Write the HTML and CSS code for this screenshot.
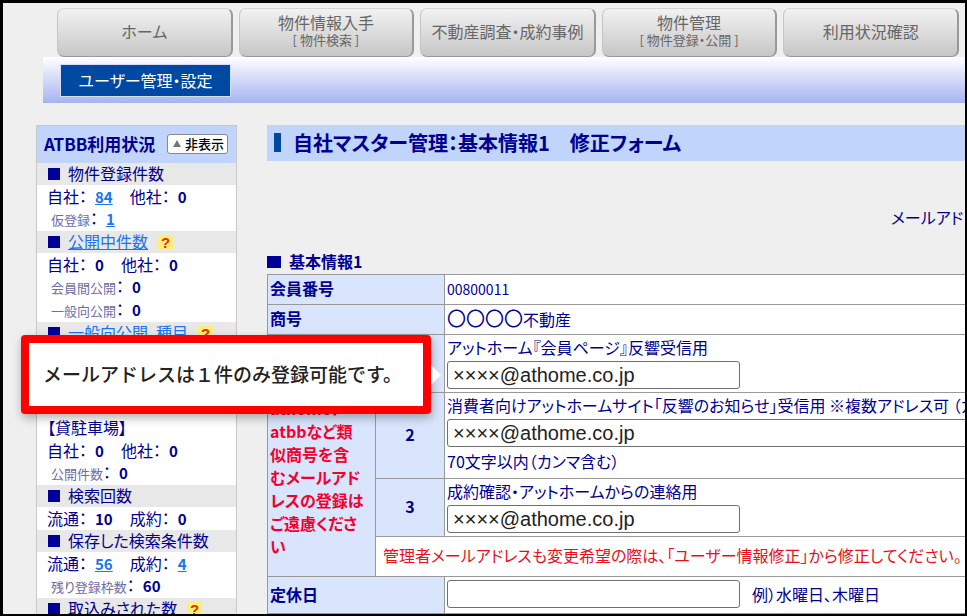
FILE: index.html
```html
<!DOCTYPE html>
<html lang="ja">
<head>
    <meta charset="UTF-8">
    <meta name="viewport" content="width=device-width, initial-scale=1.0">
    <title>自社マスター管理</title>
    <link rel="stylesheet" href="styles.css">
</head>
<body>
    <div class="frame">
        <nav class="tabs">
            <button class="tab">ホーム</button>
            <button class="tab">物件情報入手<small>[ 物件検索 ]</small></button>
            <button class="tab">不動産調査・成約事例</button>
            <button class="tab">物件管理<small>[ 物件登録・公開 ]</small></button>
            <button class="tab">利用状況確認</button>
        </nav>
        <div class="subnav">
            <button class="subnav-btn">ユーザー管理・設定</button>
        </div>

        <div class="columns">
            <aside class="sidebar">
                <div class="side-head">
                    <h2>ATBB利用状況</h2>
                    <button class="hide-btn"><span class="arrow"></span>非表示</button>
                </div>
                <h3><i class="square"></i>物件登録件数</h3>
                <p>自社：<a href="#">84</a><span class="second">他社：<b>0</b></span></p>
                <p class="sub"><small>仮登録</small>：<a href="#">1</a></p>
                <h3><i class="square"></i><a href="#">公開中件数</a><button class="help">?</button></h3>
                <p>自社：<b>0</b><span class="second">他社：<b>0</b></span></p>
                <p class="sub"><small>会員間公開</small>：<b>0</b></p>
                <p class="sub"><small>一般向公開</small>：<b>0</b></p>
                <h3><i class="square"></i><a href="#">一般向公開&ensp;種目</a><button class="help">?</button></h3>
                <div class="group">
                    <p>【貸物件】</p>
                    <p>自社：<b>0</b><span class="second">他社：<b>0</b></span></p>
                    <p class="sub"><small>公開件数</small>：<b>0</b></p>
                </div>
                <p>【貸駐車場】</p>
                <p>自社：<b>0</b><span class="second">他社：<b>0</b></span></p>
                <p class="sub"><small>公開件数</small>：<b>0</b></p>
                <h3><i class="square"></i>検索回数</h3>
                <p>流通：<b>10</b><span class="second">成約：<b>0</b></span></p>
                <h3><i class="square"></i>保存した検索条件数</h3>
                <p>流通：<a href="#">56</a><span class="second">成約：<a href="#">4</a></span></p>
                <p class="sub"><small>残り登録枠数</small>：<b>60</b></p>
                <h3><i class="square"></i>取込みされた数<button class="help">?</button></h3>
            </aside>

            <main class="main">
                <h1>自社マスター管理：基本情報1　修正フォーム</h1>
                <p class="notice">メールアドレス</p>
                <h2 class="section"><i class="square"></i>基本情報1</h2>
                <table class="form-table">
                    <colgroup>
                        <col class="col-name">
                        <col class="col-no">
                        <col>
                    </colgroup>
                    <tr>
                        <th colspan="2">会員番号</th>
                        <td><span class="number">00800011</span></td>
                    </tr>
                    <tr>
                        <th colspan="2">商号</th>
                        <td><span class="circles">〇〇〇〇</span>不動産</td>
                    </tr>
                    <tr>
                        <th rowspan="4">メール<br>アドレス<br><span class="warn">athome、<br>atbbなど類<br>似商号を含<br>むメールアド<br>レスの登録は<br>ご遠慮くださ<br>い</span></th>
                        <th class="no">1</th>
                        <td>
                            <label for="mail1">アットホーム『会員ページ』反響受信用</label>
                            <input type="text" id="mail1" value="××××@athome.co.jp">
                            <div class="callout" role="note">メールアドレスは１件のみ登録可能です。</div>
                        </td>
                    </tr>
                    <tr>
                        <th class="no">2</th>
                        <td>
                            <label for="mail2">消費者向けアットホームサイト「反響のお知らせ」受信用 ※複数アドレス可 （カンマ区切り）</label>
                            <input type="text" id="mail2" class="wide" value="××××@athome.co.jp">
                            <div class="note">70文字以内（カンマ含む）</div>
                        </td>
                    </tr>
                    <tr>
                        <th class="no">3</th>
                        <td>
                            <label for="mail3">成約確認・アットホームからの連絡用</label>
                            <input type="text" id="mail3" value="××××@athome.co.jp">
                        </td>
                    </tr>
                    <tr>
                        <td colspan="2" class="warn-cell">管理者メールアドレスも変更希望の際は、「ユーザー情報修正」から修正してください。</td>
                    </tr>
                    <tr>
                        <th colspan="2"><label for="holiday">定休日</label></th>
                        <td><div class="inline"><input type="text" id="holiday"><span>例）水曜日、木曜日</span></div></td>
                    </tr>
                    <tr>
                        <th colspan="2">営業時間</th>
                        <td></td>
                    </tr>
                </table>
            </main>
        </div>
    </div>
</body>
</html>
```

FILE: styles.css
```css
* {
    margin: 0;
    padding: 0;
    box-sizing: border-box;
}

body {
    height: 100vh;
    overflow: hidden;
    font-family: 'Noto Sans CJK JP', sans-serif;
    font-feature-settings: 'palt';
    font-size: 16px;
    line-height: 23px;
    color: #000090;
}

button,
input {
    font-family: inherit;
    font-feature-settings: inherit;
}

a {
    color: #1a75f0;
}

.frame {
    height: 100vh;
    overflow: hidden;
    border: 3px solid #000;
    border-right-width: 2px;
    border-bottom-width: 2px;
    background: #efefef;
}

/* top navigation */
.tabs {
    display: flex;
    gap: 6px;
    padding: 5px 6px 0 54px;
}

.tab {
    flex: 1 1 0;
    height: 49px;
    padding-bottom: 4px;
    border: 1px solid #c0c0c0;
    border-width: 1px 2px 1px 1px;
    border-color: #d4d4d4 #999 #999 #c4c4c4;
    border-radius: 7px;
    background: linear-gradient(#f2f2f2, #c6c6c6);
    color: #666;
    font-size: 16px;
    line-height: 18px;
    white-space: nowrap;
}

.tab small {
    display: block;
    font-size: 13px;
}

.subnav {
    height: 46px;
    margin-left: 40px;
    padding: 7px 17px;
    background: linear-gradient(#fff, #a6b3f1);
}

.subnav-btn {
    width: 171px;
    height: 33px;
    padding-bottom: 2px;
    border: 1px solid #d5ddfa;
    background: #0049a3;
    color: #fff;
    font-size: 16px;
}

.columns {
    display: flex;
    align-items: flex-start;
    gap: 30px;
    padding: 22px 0 0 33px;
}

/* usage panel */
.sidebar {
    flex: 0 0 201px;
    border: 1px solid #c8c8c8;
    background: #fff;
    white-space: nowrap;
}

.side-head {
    display: flex;
    align-items: center;
    justify-content: space-between;
    height: 37px;
    padding: 0 8px 2px 7px;
    background: #c1d5fc;
}

.side-head h2 {
    font-size: 17px;
}

.hide-btn {
    display: flex;
    align-items: center;
    gap: 4px;
    height: 20px;
    padding: 0 3px 0 5px;
    border: 1px solid #888;
    border-radius: 3px;
    background: #fff;
    color: #000;
    font-size: 13px;
    font-weight: 500;
}

.arrow {
    border: 4px solid transparent;
    border-top: 0;
    border-bottom: 7px solid #777;
}

.square {
    display: inline-block;
    width: 12px;
    height: 12px;
    margin-right: 8px;
    background: #000099;
}

.sidebar h3 {
    height: 22px;
    padding-left: 11px;
    background: #e8e8e8;
    font-size: 16px;
    font-weight: 400;
    line-height: 20px;
}

.sidebar p {
    height: 23px;
    padding-left: 10px;
    line-height: 22px;
}

.sidebar .sub {
    padding-left: 14px;
    line-height: 21px;
}

.sidebar small {
    font-size: 13px;
    color: #6c6ca8;
}

.sidebar b,
.sidebar p a {
    margin-left: 8px;
    font-size: 15px;
    font-weight: 700;
}

.second {
    margin-left: 17px;
}

.group {
    padding-bottom: 3px;
}

.help {
    width: 15px;
    height: 15px;
    margin-left: 10px;
    border: 0;
    background: #ffef7a;
    color: #e33000;
    font-family: 'Liberation Sans', sans-serif;
    font-size: 15px;
    font-weight: 700;
    line-height: 15px;
}

/* form */
.main {
    flex: 1 1 0;
    min-width: 0;
    white-space: nowrap;
}

.main h1 {
    display: flex;
    align-items: center;
    gap: 12px;
    height: 36px;
    padding: 0 0 2px 7px;
    background: #c1d5fc;
    font-size: 20px;
}

.main h1::before {
    content: '';
    width: 7px;
    height: 19px;
    background: #0049a3;
}

.notice {
    padding: 45px 0 0 624px;
}

.section {
    padding: 21px 0 1px;
    font-size: 16px;
}

.section .square {
    width: 14px;
}

.form-table {
    width: calc(100% + 80px);
    border-collapse: collapse;
    table-layout: fixed;
}

.col-name {
    width: 108px;
}

.col-no {
    width: 69px;
}

.form-table th,
.form-table td {
    height: 30px;
    padding: 0 2px 2px;
    border: 1px solid #999;
    text-align: left;
}

.form-table th {
    background: #d9e5fd;
}

.form-table td {
    position: relative;
    background: #fff;
}

.form-table .no {
    text-align: center;
}

.form-table td > label {
    display: block;
    height: 26px;
    line-height: 25px;
}

.warn {
    color: #f5002d;
}

.form-table .warn-cell {
    height: 40px;
    padding-left: 7px;
    color: #e8101a;
}

.number {
    font-size: 14px;
}

.circles {
    font-size: 19px;
}

.note {
    height: 29px;
    line-height: 29px;
}

.inline {
    display: flex;
    align-items: center;
    gap: 12px;
    padding: 3px 0;
}

input {
    display: block;
    width: 293px;
    height: 28px;
    padding: 0 5px;
    border: 1px solid #707070;
    border-radius: 3px;
    background: #fff;
    color: #222;
    font-family: 'Liberation Sans', sans-serif;
    font-size: 20px;
}

input.wide {
    width: 100%;
}

td > input {
    margin-bottom: 1px;
}

td > input.wide {
    margin-bottom: 0;
}

/* callout beside the first mail field */
.callout {
    position: absolute;
    top: 0;
    right: calc(100% + 14px);
    width: 410px;
    height: 79px;
    padding-left: 14px;
    border: 8px solid #f00;
    border-radius: 4px;
    background: #fff;
    box-shadow: 1px 4px 10px rgba(0, 0, 0, 0.3);
    color: #222;
    font-size: 19px;
    font-weight: 500;
    font-feature-settings: normal;
    line-height: 61px;
}

.callout::after {
    content: '';
    position: absolute;
    top: 22px;
    left: calc(100% + 8px);
    border: 10px solid transparent;
    border-right: 0;
    border-left-color: #fff;
}
```
